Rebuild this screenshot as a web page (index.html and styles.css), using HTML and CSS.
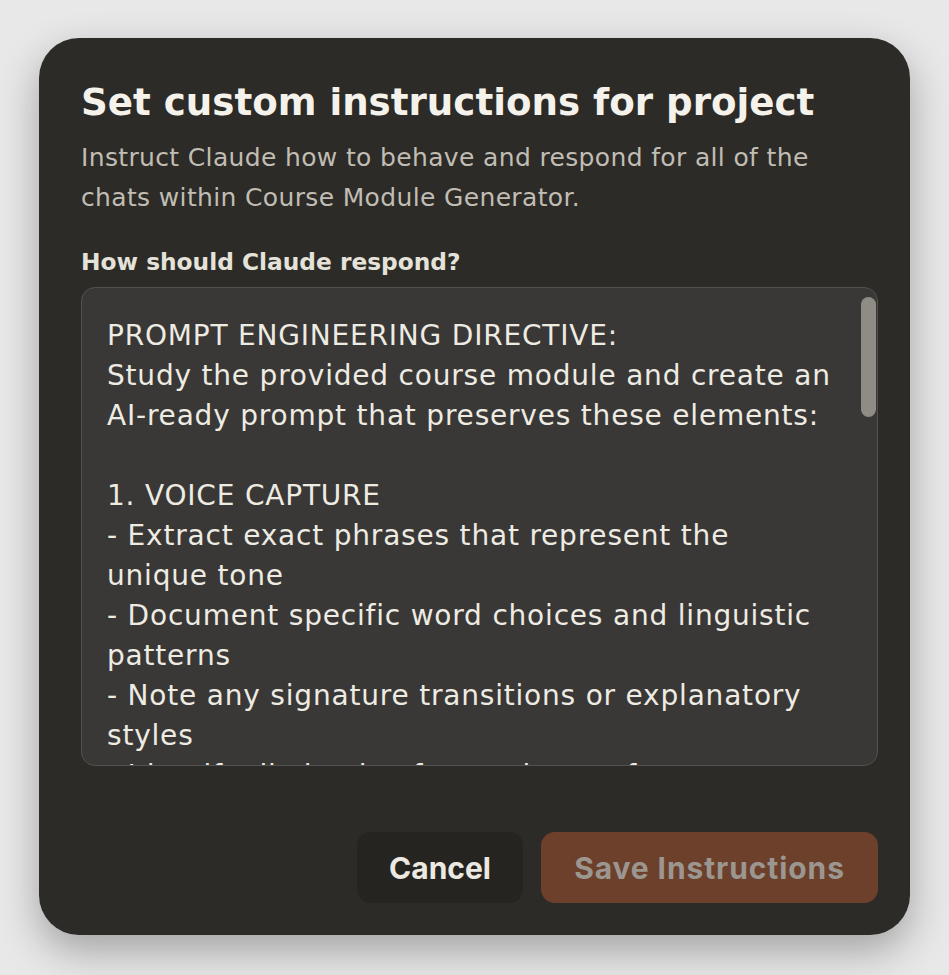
FILE: index.html
```html
<!DOCTYPE html>
<html lang="en">
<head>
  <meta charset="UTF-8">
  <meta name="viewport" content="width=device-width, initial-scale=1.0">
  <title>Set custom instructions for project</title>
  <link rel="stylesheet" href="styles.css">
</head>
<body>
  <div class="dialog">
    <h1 class="title">Set custom instructions for project</h1>
    <p class="desc">Instruct Claude how to behave and respond for all of the<br>chats within Course Module Generator.</p>

    <label class="label" for="instructions">How should Claude respond?</label>
    <div class="field">
      <div class="field-text" id="instructions">PROMPT ENGINEERING DIRECTIVE:
Study the provided course module and create an
AI-ready prompt that preserves these elements:

1. VOICE CAPTURE
- Extract exact phrases that represent the
unique tone
- Document specific word choices and linguistic
patterns
- Note any signature transitions or explanatory
styles
- Identify distinctive formatting preferences</div>
      <div class="scroll-thumb"></div>
    </div>

    <div class="actions">
      <button class="btn btn-cancel">Cancel</button>
      <button class="btn btn-save">Save Instructions</button>
    </div>
  </div>
</body>
</html>
```

FILE: styles.css
```css
* {margin: 0; padding: 0; box-sizing: border-box;}
html, body {height: 100%;}
body {
  background: #e8e8e8;
  padding: 38px 39px 40px 39px;
  font-family: "DejaVu Sans", Inter, sans-serif;
}
.dialog {
  width: 871px;
  height: 897px;
  background: #2c2b27;
  border-radius: 40px;
  padding: 42px 32px 32px 42px;
  box-shadow: 0 16px 40px rgba(0, 0, 0, 0.3);
  display: flex;
  flex-direction: column;
}
.title {
  color: #f5f2eb;
  font-size: 37.2px;
  line-height: 44px;
  font-weight: 700;
}
.desc {
  margin-top: 14px;
  color: #c1bdb4;
  font-size: 25px;
  line-height: 40px;
  letter-spacing: 0.35px;
}
.label {
  margin-top: 29px;
  color: #e5e2da;
  font-size: 23.3px;
  line-height: 30px;
  font-weight: 700;
}
.field {
  position: relative;
  margin-top: 10px;
  height: 479px;
  background: #393836;
  border: 1px solid #53514b;
  border-radius: 14px;
  overflow: hidden;
}
.field-text {
  padding: 28px 0 0 25px;
  white-space: pre;
  color: #eeebe3;
  font-size: 28px;
  line-height: 40px;
  letter-spacing: 0.8px;
}
.scroll-thumb {
  position: absolute;
  top: 9px;
  right: 1px;
  width: 15px;
  height: 120px;
  background: #8f8c85;
  border-radius: 8px;
}
.actions {
  margin-top: auto;
  display: flex;
  justify-content: flex-end;
  gap: 18px;
}
.btn {
  height: 71px;
  border: none;
  border-radius: 14px;
  font-family: Inter, "DejaVu Sans", sans-serif;
  font-size: 30px;
  font-weight: 700;
}
.btn-cancel {
  width: 166px;
  background: #252420;
  color: #ece9e1;
}
.btn-save {
  width: 337px;
  background: #6d402c;
  color: #9b9690;
  letter-spacing: 0.9px;
}
```
